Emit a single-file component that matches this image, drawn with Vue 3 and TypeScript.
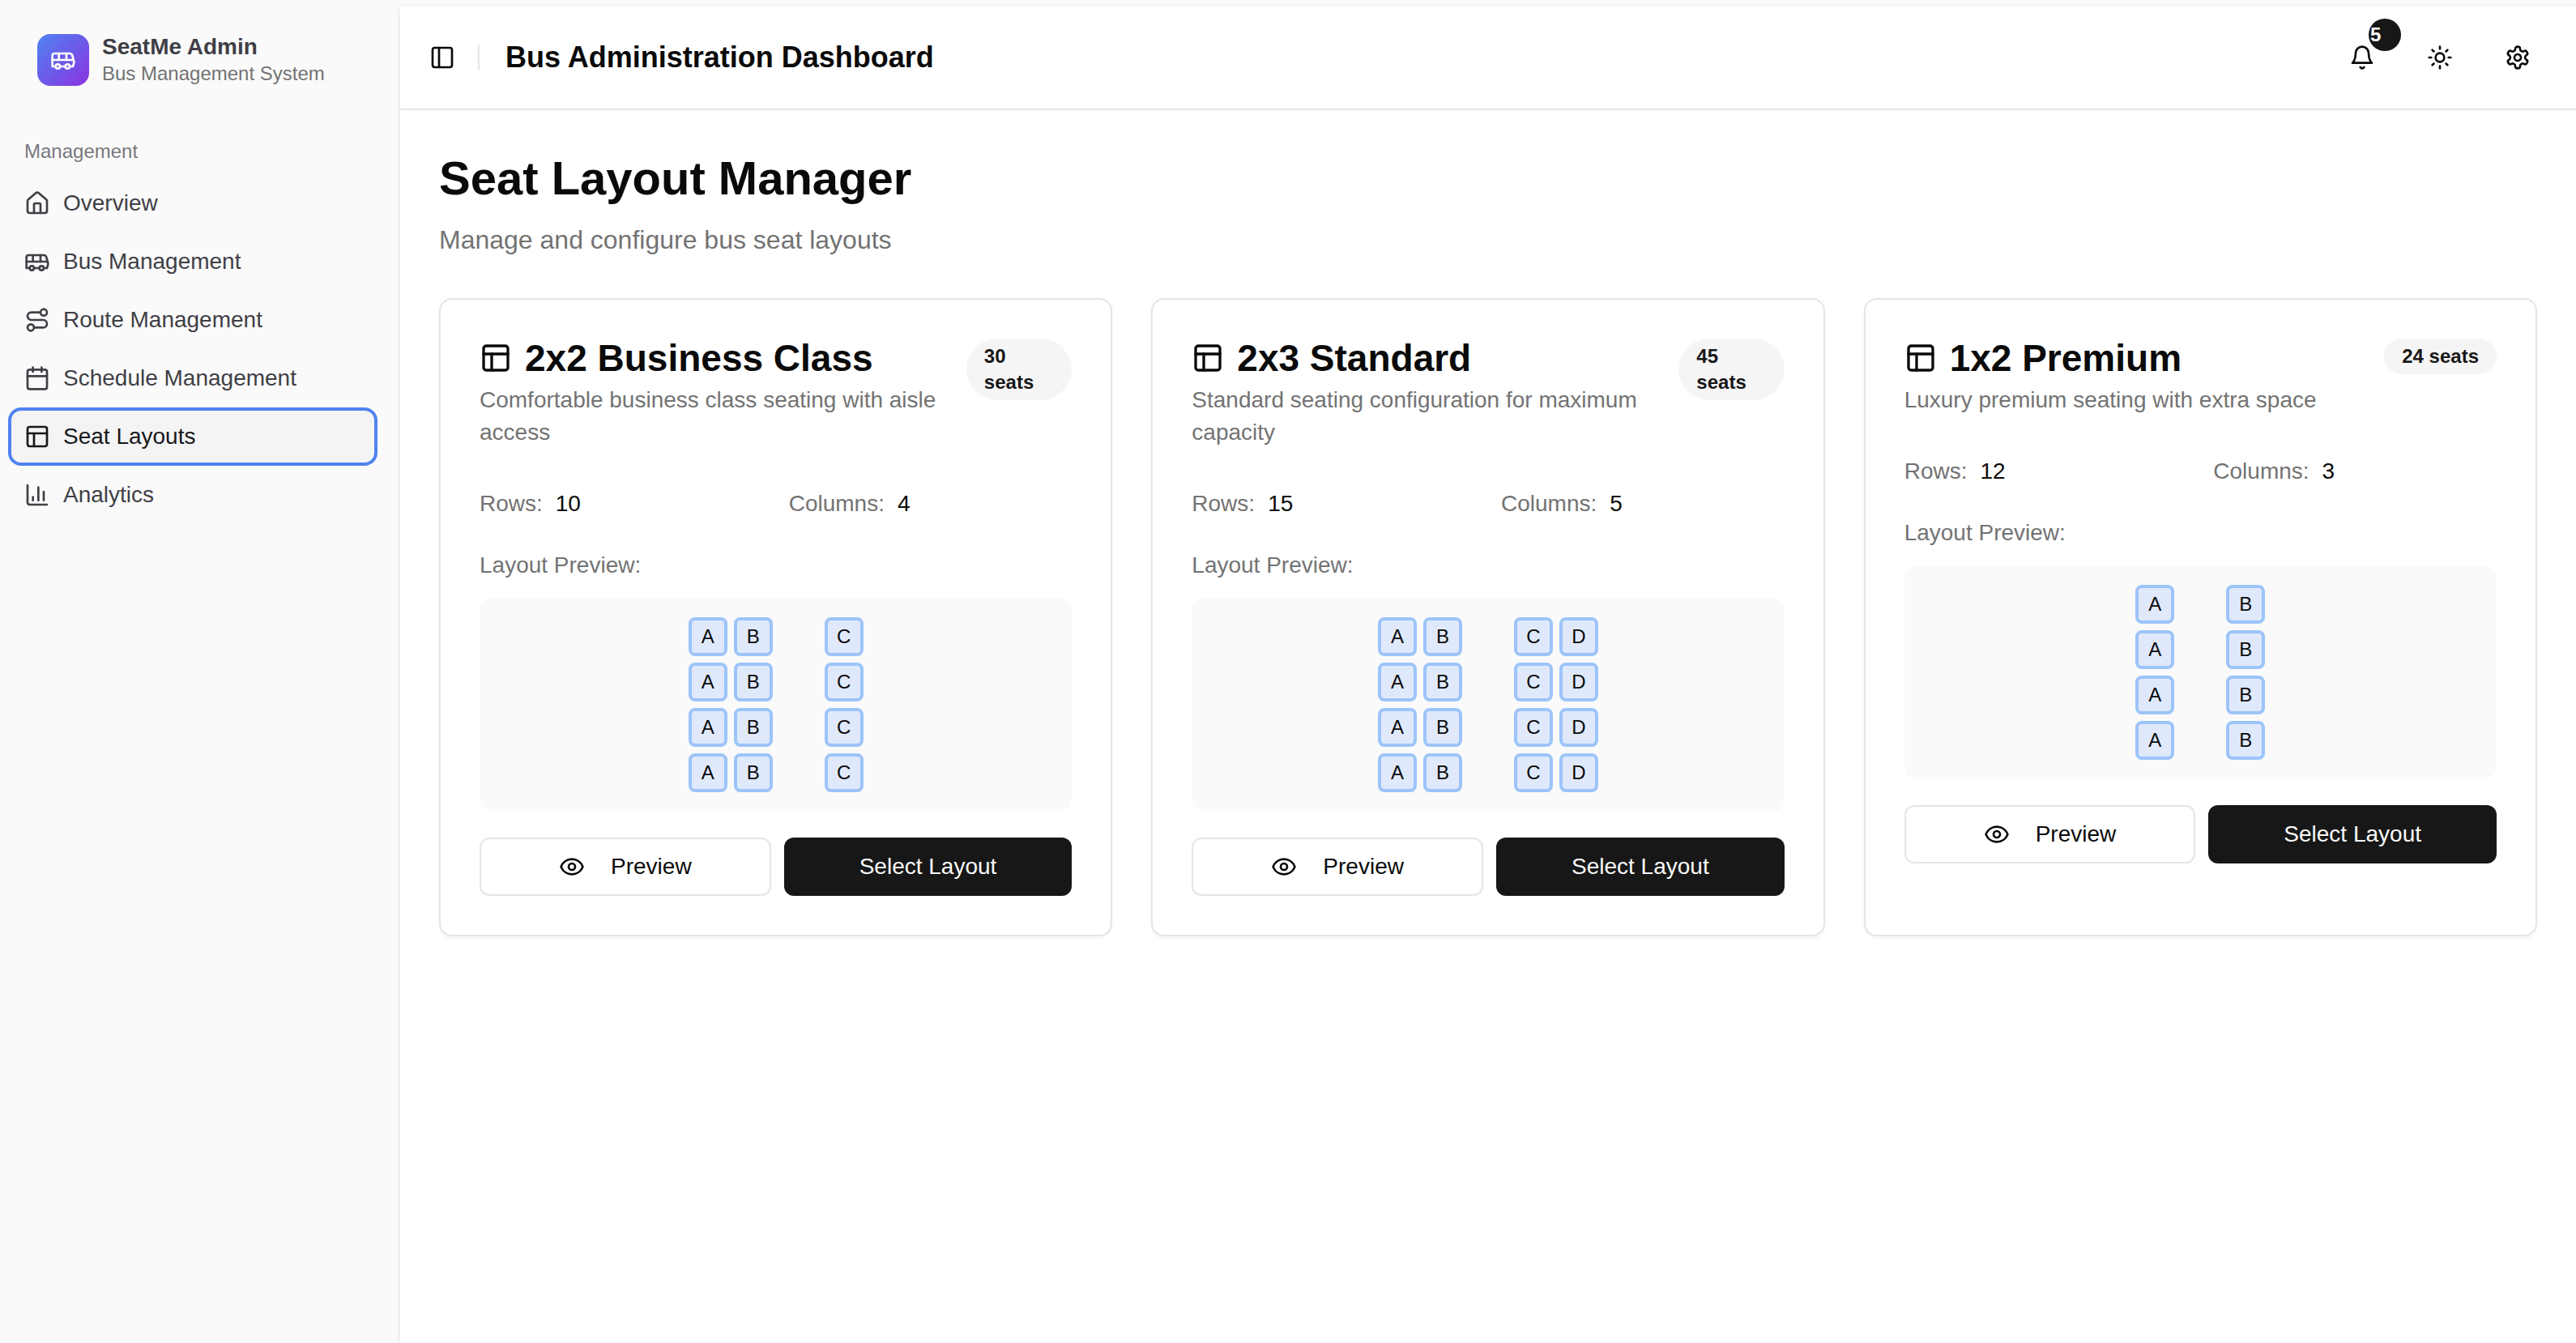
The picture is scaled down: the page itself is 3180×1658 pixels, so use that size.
<script setup lang="ts">
import { ref } from 'vue'

type IconName = 'home' | 'bus' | 'route' | 'calendar' | 'layout' | 'chart' | 'panel' | 'bell' | 'sun' | 'settings' | 'eye'

interface NavItem {
  label: string
  icon: IconName
}

interface SeatLayout {
  name: string
  description: string
  seats: number
  rows: number
  columns: number
  pattern: string[]
}

// Stroke shapes on a 24 by 24 grid
const icons: Record<IconName, string> = {
  home: '<path d="M15 21v-8a1 1 0 0 0-1-1h-4a1 1 0 0 0-1 1v8"/><path d="M3 10a2 2 0 0 1 .709-1.528l7-5.999a2 2 0 0 1 2.582 0l7 5.999A2 2 0 0 1 21 10v9a2 2 0 0 1-2 2H5a2 2 0 0 1-2-2z"/>',
  bus: '<path d="M8 6v6"/><path d="M15 6v6"/><path d="M2 12h19.6"/><path d="M18 18h3s.5-1.7.8-2.8c.1-.4.2-.8.2-1.2 0-.4-.1-.8-.2-1.2l-1.4-5C20.1 6.8 19.1 6 18 6H4a2 2 0 0 0-2 2v10h3"/><circle cx="7" cy="18" r="2"/><path d="M9 18h5"/><circle cx="16" cy="18" r="2"/>',
  route: '<circle cx="6" cy="19" r="3"/><path d="M9 19h8.5a3.5 3.5 0 0 0 0-7h-11a3.5 3.5 0 0 1 0-7H15"/><circle cx="18" cy="5" r="3"/>',
  calendar: '<path d="M8 2v4"/><path d="M16 2v4"/><rect width="18" height="18" x="3" y="4" rx="2"/><path d="M3 10h18"/>',
  layout: '<rect width="18" height="18" x="3" y="3" rx="2"/><path d="M3 9h18"/><path d="M9 21V9"/>',
  chart: '<path d="M3 3v16a2 2 0 0 0 2 2h16"/><path d="M18 17V9"/><path d="M13 17V5"/><path d="M8 17v-3"/>',
  panel: '<rect width="18" height="18" x="3" y="3" rx="2"/><path d="M9 3v18"/>',
  bell: '<path d="M6 8a6 6 0 0 1 12 0c0 7 3 9 3 9H3s3-2 3-9"/><path d="M10.3 21a1.94 1.94 0 0 0 3.4 0"/>',
  sun: '<circle cx="12" cy="12" r="4"/><path d="M12 2v2"/><path d="M12 20v2"/><path d="m4.93 4.93 1.41 1.41"/><path d="m17.66 17.66 1.41 1.41"/><path d="M2 12h2"/><path d="M20 12h2"/><path d="m6.34 17.66-1.41 1.41"/><path d="m19.07 4.93-1.41 1.41"/>',
  settings: '<path d="M12.22 2h-.44a2 2 0 0 0-2 2v.18a2 2 0 0 1-1 1.73l-.43.25a2 2 0 0 1-2 0l-.15-.08a2 2 0 0 0-2.73.73l-.22.38a2 2 0 0 0 .73 2.73l.15.1a2 2 0 0 1 1 1.72v.51a2 2 0 0 1-1 1.74l-.15.09a2 2 0 0 0-.73 2.73l.22.38a2 2 0 0 0 2.73.73l.15-.08a2 2 0 0 1 2 0l.43.25a2 2 0 0 1 1 1.73V20a2 2 0 0 0 2 2h.44a2 2 0 0 0 2-2v-.18a2 2 0 0 1 1-1.73l.43-.25a2 2 0 0 1 2 0l.15.08a2 2 0 0 0 2.73-.73l.22-.39a2 2 0 0 0-.73-2.73l-.15-.08a2 2 0 0 1-1-1.74v-.5a2 2 0 0 1 1-1.74l.15-.09a2 2 0 0 0 .73-2.73l-.22-.38a2 2 0 0 0-2.73-.73l-.15.08a2 2 0 0 1-2 0l-.43-.25a2 2 0 0 1-1-1.73V4a2 2 0 0 0-2-2z"/><circle cx="12" cy="12" r="3"/>',
  eye: '<path d="M2.062 12.348a1 1 0 0 1 0-.696 10.75 10.75 0 0 1 19.876 0 1 1 0 0 1 0 .696 10.75 10.75 0 0 1-19.876 0"/><circle cx="12" cy="12" r="3"/>',
}

const navItems: NavItem[] = [
  { label: 'Overview', icon: 'home' },
  { label: 'Bus Management', icon: 'bus' },
  { label: 'Route Management', icon: 'route' },
  { label: 'Schedule Management', icon: 'calendar' },
  { label: 'Seat Layouts', icon: 'layout' },
  { label: 'Analytics', icon: 'chart' },
]

// An empty string in a pattern is the aisle
const layouts: SeatLayout[] = [
  {
    name: '2x2 Business Class',
    description: 'Comfortable business class seating with aisle access',
    seats: 30,
    rows: 10,
    columns: 4,
    pattern: ['A', 'B', '', 'C'],
  },
  {
    name: '2x3 Standard',
    description: 'Standard seating configuration for maximum capacity',
    seats: 45,
    rows: 15,
    columns: 5,
    pattern: ['A', 'B', '', 'C', 'D'],
  },
  {
    name: '1x2 Premium',
    description: 'Luxury premium seating with extra space',
    seats: 24,
    rows: 12,
    columns: 3,
    pattern: ['A', '', 'B'],
  },
]

const previewRows = 4
const active = ref('Seat Layouts')
const notifications = ref(5)
</script>

<template>
  <div class="app">
    <aside class="sidebar">
      <div class="brand">
        <div class="brand-logo">
          <svg class="icon" viewBox="0 0 24 24" aria-hidden="true" v-html="icons.bus"></svg>
        </div>
        <div class="brand-text">
          <span class="brand-name">SeatMe Admin</span>
          <span class="brand-sub">Bus Management System</span>
        </div>
      </div>
      <nav class="nav" aria-labelledby="nav-label">
        <div id="nav-label" class="nav-label">Management</div>
        <ul class="nav-list">
          <li v-for="item in navItems" :key="item.label">
            <a
              href="#"
              class="nav-item"
              :class="{ active: item.label === active }"
              @click.prevent="active = item.label"
            >
              <svg class="icon" viewBox="0 0 24 24" aria-hidden="true" v-html="icons[item.icon]"></svg>
              <span>{{ item.label }}</span>
            </a>
          </li>
        </ul>
      </nav>
    </aside>

    <div class="panel">
      <header class="topbar">
        <button type="button" class="toggle" aria-label="Toggle sidebar">
          <svg class="icon" viewBox="0 0 24 24" aria-hidden="true" v-html="icons.panel"></svg>
        </button>
        <div class="separator"></div>
        <h1 class="topbar-title">Bus Administration Dashboard</h1>
        <div class="actions">
          <button type="button" class="icon-button" aria-label="Notifications">
            <svg class="icon" viewBox="0 0 24 24" aria-hidden="true" v-html="icons.bell"></svg>
            <span class="count">{{ notifications }}</span>
          </button>
          <button type="button" class="icon-button" aria-label="Toggle theme">
            <svg class="icon" viewBox="0 0 24 24" aria-hidden="true" v-html="icons.sun"></svg>
          </button>
          <button type="button" class="icon-button" aria-label="Settings">
            <svg class="icon" viewBox="0 0 24 24" aria-hidden="true" v-html="icons.settings"></svg>
          </button>
        </div>
      </header>

      <main class="content">
        <div class="intro">
          <h2 class="page-title">Seat Layout Manager</h2>
          <p class="page-sub">Manage and configure bus seat layouts</p>
        </div>

        <div class="cards">
          <article v-for="layout in layouts" :key="layout.name" class="card">
            <div class="card-head">
              <div class="card-heading">
                <h3 class="card-title">
                  <svg class="icon icon-lg" viewBox="0 0 24 24" aria-hidden="true" v-html="icons.layout"></svg>
                  <span>{{ layout.name }}</span>
                </h3>
                <p class="card-desc">{{ layout.description }}</p>
              </div>
              <div class="badge">{{ layout.seats }} seats</div>
            </div>

            <div class="card-body">
              <div class="stats">
                <div><span class="muted">Rows:</span><span class="value">{{ layout.rows }}</span></div>
                <div><span class="muted">Columns:</span><span class="value">{{ layout.columns }}</span></div>
              </div>

              <div class="preview">
                <div class="preview-label">Layout Preview:</div>
                <div class="preview-box">
                  <div v-for="row in previewRows" :key="row" class="seat-row">
                    <div
                      v-for="(seat, i) in layout.pattern"
                      :key="i"
                      :class="seat ? 'seat' : 'aisle'"
                    >{{ seat }}</div>
                  </div>
                </div>
              </div>

              <div class="card-actions">
                <button type="button" class="btn btn-outline">
                  <svg class="icon" viewBox="0 0 24 24" aria-hidden="true" v-html="icons.eye"></svg>
                  Preview
                </button>
                <button type="button" class="btn btn-primary">Select Layout</button>
              </div>
            </div>
          </article>
        </div>
      </main>
    </div>
  </div>
</template>

<style>
body {
  background: #fafafa;
}
</style>

<style scoped>
.app,
.app * {
  box-sizing: border-box;
}

.app {
  display: flex;
  min-height: 100vh;
  padding-top: 8px;
  background: #fafafa;
  color: #0a0a0a;
  font-family: "Liberation Sans", Arial, Helvetica, sans-serif;
  font-size: 32px;
  line-height: 48px;
}

h1,
h2,
h3,
p,
ul {
  margin: 0;
  padding: 0;
}

button {
  border: 0;
  background: none;
  padding: 0;
  color: inherit;
  font: inherit;
  cursor: pointer;
}

.icon {
  flex: none;
  width: 32px;
  height: 32px;
  fill: none;
  stroke: currentColor;
  stroke-width: 2;
  stroke-linecap: round;
  stroke-linejoin: round;
}

.icon-lg {
  width: 40px;
  height: 40px;
}

/* Sidebar */
.sidebar {
  flex: none;
  width: 494px;
  padding: 34px 32px 32px 14px;
  color: #3f3f46;
}

.brand {
  display: flex;
  align-items: center;
  gap: 16px;
  height: 64px;
  padding: 0 32px;
}

.brand-logo {
  display: flex;
  align-items: center;
  justify-content: center;
  flex: none;
  width: 64px;
  height: 64px;
  border-radius: 16px;
  background: linear-gradient(135deg, #4f83f1, #8a33e0);
  color: #fff;
}

.brand-text {
  display: flex;
  flex-direction: column;
  white-space: nowrap;
}

.brand-name {
  font-size: 28px;
  font-weight: 600;
  line-height: 34px;
}

.brand-sub {
  color: #737373;
  font-size: 24px;
  line-height: 32px;
}

.nav {
  margin-top: 49px;
}

.nav-label {
  padding: 0 16px;
  color: #78787d;
  font-size: 24px;
  line-height: 64px;
}

.nav-list {
  display: flex;
  flex-direction: column;
  gap: 8px;
  list-style: none;
}

.nav-item {
  display: flex;
  align-items: center;
  gap: 16px;
  height: 64px;
  padding: 0 16px;
  border-radius: 12px;
  color: inherit;
  font-size: 28px;
  line-height: 40px;
  text-decoration: none;
}

.nav-item.active {
  background: #f4f4f4;
  box-shadow: 0 0 0 4px #4f83f1;
  color: #18181b;
}

/* Main panel */
.panel {
  flex: 1;
  min-width: 0;
  background: #fff;
  box-shadow: 0 2px 6px rgba(0, 0, 0, 0.1), 0 2px 4px -2px rgba(0, 0, 0, 0.1);
}

.topbar {
  display: flex;
  align-items: center;
  height: 128px;
  padding: 0 32px 0 24px;
  border-bottom: 2px solid #e5e5e5;
}

.toggle {
  display: flex;
  align-items: center;
  justify-content: center;
  width: 56px;
  height: 56px;
}

.separator {
  width: 2px;
  height: 32px;
  margin: 0 32px 0 16px;
  background: #e5e5e5;
}

.topbar-title {
  font-size: 36px;
  font-weight: 600;
  line-height: 56px;
}

.actions {
  display: flex;
  gap: 16px;
  margin-left: auto;
}

.icon-button {
  position: relative;
  display: flex;
  align-items: center;
  justify-content: center;
  width: 80px;
  height: 80px;
}

.count {
  position: absolute;
  top: -8px;
  right: -8px;
  width: 40px;
  height: 40px;
  padding: 4px 2px;
  border-radius: 20px;
  background: #171717;
  color: #fafafa;
  font-size: 24px;
  font-weight: 600;
  line-height: 32px;
  text-align: left;
}

.content {
  display: flex;
  flex-direction: column;
  gap: 48px;
  padding: 48px;
}

.page-title {
  font-size: 58px;
  font-weight: 700;
  line-height: 72px;
}

.page-sub {
  margin-top: 16px;
  color: #737373;
}

.cards {
  display: grid;
  grid-template-columns: repeat(3, minmax(0, 1fr));
  gap: 48px;
}

.card {
  padding: 48px;
  border: 2px solid #e5e5e5;
  border-radius: 16px;
  background: #fff;
  box-shadow: 0 2px 4px rgba(0, 0, 0, 0.05);
}

.card-head {
  display: flex;
  align-items: flex-start;
  justify-content: space-between;
}

.card-title {
  display: flex;
  align-items: center;
  gap: 16px;
  font-size: 46px;
  font-weight: 600;
  line-height: 48px;
}

.card-desc {
  margin-top: 8px;
  color: #737373;
  font-size: 28px;
  line-height: 40px;
}

.badge {
  padding: 6px 22px;
  border-radius: 40px;
  background: #f5f5f5;
  color: #171717;
  font-size: 24px;
  font-weight: 600;
  line-height: 32px;
}

.card-body {
  display: flex;
  flex-direction: column;
  gap: 32px;
  margin-top: 48px;
}

.stats {
  display: grid;
  grid-template-columns: 1fr 1fr;
  gap: 32px;
  font-size: 28px;
  line-height: 40px;
}

.muted {
  color: #737373;
}

.value {
  margin-left: 16px;
  font-weight: 500;
}

.preview {
  display: flex;
  flex-direction: column;
  gap: 16px;
}

.preview-label {
  color: #737373;
  font-size: 28px;
  line-height: 48px;
}

.preview-box {
  display: flex;
  flex-direction: column;
  gap: 8px;
  padding: 24px;
  border-radius: 16px;
  background: #fafafa;
}

.seat-row {
  display: flex;
  justify-content: center;
  gap: 8px;
}

.seat,
.aisle {
  width: 48px;
  height: 48px;
}

.seat {
  border: 4px solid #9cc4f9;
  border-radius: 8px;
  background: #dfe9fb;
  font-size: 24px;
  line-height: 40px;
  text-align: center;
}

.card-actions {
  display: flex;
  gap: 16px;
}

.btn {
  display: flex;
  flex: 1 1 0;
  align-items: center;
  justify-content: center;
  gap: 32px;
  height: 72px;
  padding: 0 24px;
  border-radius: 12px;
  font-size: 28px;
  font-weight: 500;
  line-height: 40px;
}

.btn-outline {
  border: 2px solid #e5e5e5;
  background: #fff;
}

.btn-primary {
  background: #171717;
  color: #fafafa;
}
</style>
